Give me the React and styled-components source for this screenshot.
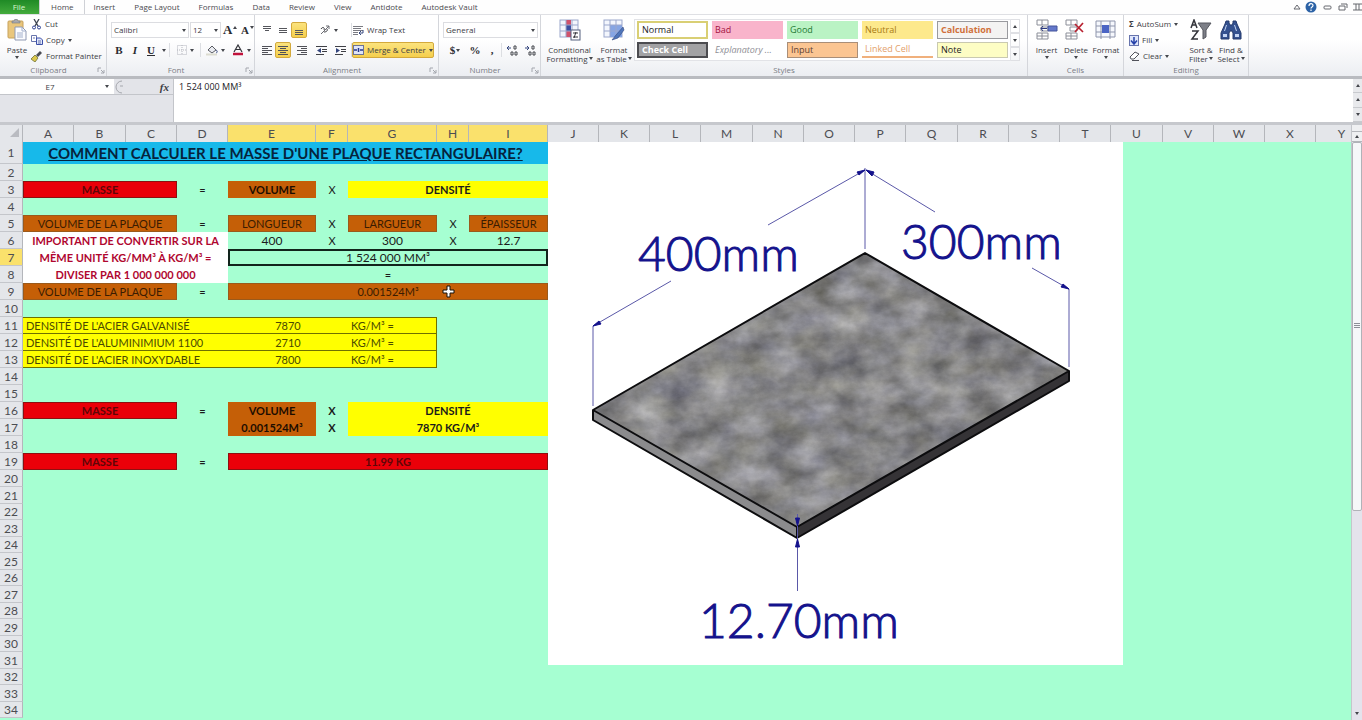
import React, { useState } from "react";
import styled, { createGlobalStyle, css } from "styled-components";

const GlobalStyle = createGlobalStyle`
  * {
    box-sizing: border-box;
  }

  body {
    margin: 0;
    background: #a6ffd2;
  }

  button, input, select, textarea {
    font: inherit;
    color: inherit;
    margin: 0;
    padding: 0;
    border: 0;
    background: none;
    outline: none;
  }
`;

const Window = styled.div`
  display: flex;
  flex-direction: column;
  height: 100vh;
  overflow: hidden;
  font-family: "Open Sans", "Noto Sans", sans-serif;
  font-size: 8px;
  line-height: 10px;
  color: #3c3c44;
`;

/* tabs */

const TabBar = styled.nav`
  display: flex;
  height: 14px;
  flex: none;
  background: #fefefe;
`;

const Tab = styled.button`
  padding: 0 10px 0 9px;
  height: 14px;
  line-height: 12px;
  white-space: nowrap;
  color: #4a4a50;

  ${({ $file }) =>
    $file &&
    css`
      width: 39px;
      color: #d9f5cf;
      background: linear-gradient(#1f8a26, #43ab3c);
    `}

  ${({ $active }) =>
    $active &&
    css`
      padding-left: 11px;
      border-left: 1px solid #cfd1d6;
      border-right: 1px solid #cfd1d6;
    `}
`;

const WindowButtons = styled.div`
  display: flex;
  align-items: center;
  gap: 4px;
  margin-left: auto;
`;

const PlainButton = styled.button`
  display: flex;
  align-items: center;
  justify-content: center;
`;

/* ribbon */

const Ribbon = styled.div`
  display: flex;
  flex: none;
  height: 65px;
  border-top: 1px solid #dfe0e4;
  border-bottom: 3px solid #b9bbc0;
  background: linear-gradient(#ffffff 40%, #eceef2);
`;

const Group = styled.section`
  display: flex;
  flex-direction: column;
  flex: none;
  width: ${({ $width }) => $width}px;
  border-right: 1px solid #d4d6db;
`;

const GroupBody = styled.div`
  display: flex;
  height: 49px;
  padding: 1px 2px 0 4px;
`;

const GroupLabel = styled.div`
  display: flex;
  height: 12px;
  align-items: center;
  justify-content: center;
  color: #7b7d84;

  span {
    flex: 1;
    text-align: center;
  }
`;

const Stack = styled.div`
  display: flex;
  flex-direction: column;
  flex: 1;
  padding-top: ${({ $tight }) => ($tight ? 0 : 6)}px;
  gap: ${({ $tight }) => ($tight ? 0 : 4)}px;
`;

const Line = styled.div`
  display: flex;
  align-items: center;
  height: 16px;
  gap: ${({ $gap }) => $gap || 0}px;
`;

const Tool = styled.button`
  display: flex;
  align-items: center;
  justify-content: center;
  flex: none;
  gap: 3px;
  height: 16px;
  min-width: ${({ $width }) => $width || 16}px;
  white-space: nowrap;
  border: 1px solid transparent;

  ${({ $on }) =>
    $on &&
    css`
      border-color: #d3a93c;
      border-radius: 2px;
      background: linear-gradient(#fbe37e, #f5cf4d);
    `}
`;

const BigTool = styled.button`
  display: flex;
  flex-direction: column;
  align-items: center;
  flex: none;
  width: ${({ $width }) => $width}px;
  padding-top: 3px;
  line-height: 9px;
  white-space: nowrap;

  > svg:first-child {
    margin-bottom: 4px;
  }

  > svg:last-child {
    margin-top: 2px;
  }
`;

const Select = styled.select`
  appearance: none;
  width: ${({ $width }) => $width}px;
  height: 16px;
  padding-left: 2px;
  border: 1px solid #dcdde1;
  background: #ffffff;
`;

const SelectWrap = styled.label`
  position: relative;
  display: flex;
  align-items: center;

  svg {
    position: absolute;
    right: 3px;
  }
`;

const Rule = styled.span`
  width: 1px;
  height: 14px;
  background: #dcdee2;
`;

const Gallery = styled.div`
  display: grid;
  grid-template-columns: repeat(5, 71px);
  grid-template-rows: 18px 16px;
  gap: 3px 4px;
  padding: 1px 2px 0 2px;
  height: 42px;
  margin-top: 3px;
  border: 1px solid #e2e3e7;
  background: #ffffff;
`;

const Style = styled.button`
  padding-left: 3px;
  text-align: left;
  font-size: 9px;
  white-space: nowrap;
  color: ${({ $color }) => $color};
  background: ${({ $fill }) => $fill};
  border: ${({ $border }) => $border || "0"};
  border-bottom: ${({ $under, $border }) => $under || $border || "0"};
  font-weight: ${({ $bold }) => ($bold ? 700 : 400)};
  font-style: ${({ $italic }) => ($italic ? "italic" : "normal")};
`;

const GalleryArrows = styled.div`
  display: flex;
  flex-direction: column;
  width: 9px;
  height: 42px;
  margin-top: 3px;

  button {
    flex: 1;
    border: 1px solid #dfe0e4;
    border-left: 0;
  }
`;

/* formula bar */

const FormulaBar = styled.div`
  display: flex;
  flex: none;
  height: 43px;
  background: #e3e4e9;
`;

const NameArea = styled.div`
  display: flex;
  align-items: center;
  width: 173px;
  height: 16px;
  border-bottom: 1px solid #c3c5ca;
`;

const NameBox = styled.input`
  width: 100px;
  height: 15px;
  text-align: center;
  background: #ffffff;
`;

const NameArrow = styled(PlainButton)`
  width: 14px;
  height: 15px;
  background: #ffffff;
`;

const FxButton = styled.button`
  margin-left: auto;
  margin-right: 4px;
  font-family: "Liberation Serif", serif;
  font-size: 11px;
  font-style: italic;
  font-weight: 700;
`;

const Formula = styled.textarea`
  flex: 1;
  padding: 2px 5px;
  resize: none;
  font-size: 9px;
  line-height: 12px;
  border-left: 1px solid #c3c5ca;
  background: #ffffff;
  color: #222226;
`;

const SideArrows = styled.div`
  display: flex;
  flex-direction: column;
  width: 9px;
  background: #e8e9ec;

  button {
    flex: 1;
    border-bottom: 1px solid #c8cace;
  }
`;

/* sheet */

const SheetArea = styled.div`
  display: flex;
  flex: 1;
  min-height: 0;
  border-top: 3px solid #c6c8cd;
  background: #a6ffd2;
`;

const Sheet = styled.div`
  position: relative;
  flex: 1;
  min-width: 0;
  overflow: hidden;
`;

const Grid = styled.table`
  width: 1368px;
  table-layout: fixed;
  border-collapse: separate;
  border-spacing: 0;
  font-family: Lato, "Open Sans", sans-serif;
  font-size: 12px;
  line-height: 15px;
  color: #1b1b1b;

  th, td {
    padding: 0;
    overflow: hidden;
    white-space: nowrap;
  }
`;

const ColumnHead = styled.th`
  height: 17px;
  font-weight: 400;
  color: #4c4d52;
  border-right: 1px solid #b4b6bb;
  background: ${({ $on }) => ($on ? "#fae16c" : "#e4e6ea")};
`;

const RowHead = styled.th`
  height: ${({ $height }) => $height}px;
  font-weight: 400;
  color: #4c4d52;
  border-right: 1px solid #b4b6bb;
  border-bottom: 1px solid #c4c6cb;
  background: ${({ $on }) => ($on ? "#fae16c" : "#e4e6ea")};
`;

const kinds = {
  plain: css``,
  number: css`
    font-size: 12px;
  `,
  bold: css`
    font-weight: 700;
  `,
  title: css`
    font-size: 15px;
    line-height: 22px;
    font-weight: 700;
    text-decoration: underline;
    color: #06233c;
    background: #17b9ea;
  `,
  red: css`
    font-weight: 700;
    color: #5e0608;
    background: #ea0009;
    box-shadow: inset 0 0 0 1px #8e1010;
  `,
  brown: css`
    color: #3a1c02;
    background: #c55f07;
    box-shadow: inset 0 0 0 1px #9a5a1c;
  `,
  brownBold: css`
    font-weight: 700;
    color: #1d0d00;
    background: #c55f07;
  `,
  yellow: css`
    font-weight: 700;
    background: #ffff00;
  `,
  note: css`
    font-weight: 700;
    line-height: 17px;
    color: #b0062f;
    background: #ffffff;
  `,
  density: css`
    color: #4a4a00;
    background: #ffff00;
    border-bottom: 1px solid #6f7000;
  `,
  selected: css`
    font-size: 12px;
    line-height: 13px;
    border: 2px solid #12241c;
  `,
};

const Cell = styled.td`
  font-size: 11px;
  text-align: ${({ $left }) => ($left ? "left" : "center")};
  ${({ $kind }) => kinds[$kind]}
  && {
    padding-left: ${({ $left }) => ($left ? 3 : 0)}px;
    white-space: ${({ $kind }) => ($kind === "note" ? "pre-line" : "nowrap")};
  }
  ${({ $top }) => $top && "border-top: 1px solid #6f7000;"}
  ${({ $end }) => $end && "border-right: 1px solid #6f7000;"}
`;

const Picture = styled.figure`
  position: absolute;
  left: 548px;
  top: 17px;
  margin: 0;
  background: #ffffff;

  svg {
    display: block;
  }

  text {
    font-family: Lato, sans-serif;
    font-size: 48px;
    font-weight: 300;
    fill: #14128c;
    stroke: #14128c;
    stroke-width: 1px;
  }
`;

const Pointer = styled.svg`
  position: absolute;
  left: 442px;
  top: 160px;
`;

const ScrollBar = styled.div`
  display: flex;
  flex-direction: column;
  flex: none;
  width: 11px;
  background: #e4e3ec;
  border-left: 1px solid #c4c6cb;

  button {
    height: 10px;
    flex: none;
    background: #eff0f2;
    border-bottom: 1px solid #b4b6bb;
  }

  button:first-child {
    height: 7px;
  }

  button:last-child {
    height: 14px;
    margin-top: auto;
    border-bottom: 0;
    background: none;
  }
`;

const ScrollThumb = styled.div`
  display: flex;
  align-items: center;
  justify-content: center;
  height: 62%;
  border: 1px solid #b0b2b8;
  border-radius: 2px;
  background: #f6f7f9;
`;

const columns = [
  ["A", 51], ["B", 52], ["C", 51], ["D", 51], ["E", 88], ["F", 32],
  ["G", 89], ["H", 32], ["I", 79], ["J", 51], ["K", 51], ["L", 51],
  ["M", 52], ["N", 51], ["O", 51], ["P", 51], ["Q", 52], ["R", 51],
  ["S", 51], ["T", 51], ["U", 52], ["V", 51], ["W", 51], ["X", 51],
  ["Y", 52],
];

const density = (name, value, top) => [
  { span: 4, kind: "density", left: true, top, text: name },
  { span: 2, kind: "density", top, text: value },
  { kind: "density", left: true, top, end: true, text: "KG/M³ =" },
];

const rows = {
  1: [{ span: 9, kind: "title", text: "COMMENT CALCULER LE MASSE D'UNE PLAQUE RECTANGULAIRE?" }],
  3: [
    { span: 3, kind: "red", text: "MASSE" },
    { text: "=" },
    { kind: "brownBold", text: "VOLUME" },
    { text: "X" },
    { span: 3, kind: "yellow", text: "DENSITÉ" },
  ],
  5: [
    { span: 3, kind: "brown", text: "VOLUME DE LA PLAQUE" },
    { text: "=" },
    { kind: "brown", text: "LONGUEUR" },
    { text: "X" },
    { kind: "brown", text: "LARGUEUR" },
    { text: "X" },
    { kind: "brown", text: "ÉPAISSEUR" },
  ],
  6: [
    {
      span: 4,
      rows: 3,
      kind: "note",
      text: "IMPORTANT DE CONVERTIR SUR LA\nMÊME UNITÉ KG/MM³ À KG/M³ =\nDIVISER PAR 1 000 000 000",
    },
    { kind: "number", text: "400" },
    { text: "X" },
    { kind: "number", text: "300" },
    { text: "X" },
    { kind: "number", text: "12.7" },
  ],
  7: [{ span: 5, kind: "selected", text: "1 524 000 MM³" }],
  8: [{ span: 5, text: "=" }],
  9: [
    { span: 3, kind: "brown", text: "VOLUME DE LA PLAQUE" },
    { text: "=" },
    { span: 5, kind: "brown", text: "0.001524M³" },
  ],
  11: density("DENSITÉ DE L'ACIER GALVANISÉ", "7870", true),
  12: density("DENSITÉ DE L'ALUMINIMIUM 1100", "2710"),
  13: density("DENSITÉ DE L'ACIER INOXYDABLE", "7800"),
  16: [
    { span: 3, kind: "red", text: "MASSE" },
    { kind: "bold", text: "=" },
    { kind: "brownBold", text: "VOLUME" },
    { kind: "bold", text: "X" },
    { span: 3, kind: "yellow", text: "DENSITÉ" },
  ],
  17: [
    { span: 4 },
    { kind: "brownBold", text: "0.001524M³" },
    { kind: "bold", text: "X" },
    { span: 3, kind: "yellow", text: "7870 KG/M³" },
  ],
  19: [
    { span: 3, kind: "red", text: "MASSE" },
    { kind: "bold", text: "=" },
    { span: 5, kind: "red", text: "11.99 KG" },
  ],
};

const rowHeight = (n) => {
  if (n === 1) return 22;
  if (n < 22) return 17;
  return n % 2 ? 17 : 16;
};

const styleCells = [
  { text: "Normal", color: "#222", fill: "#fff", border: "2px solid #d9cf74" },
  { text: "Bad", color: "#a3123f", fill: "#f9b4cb" },
  { text: "Good", color: "#1f7a34", fill: "#baf3c4" },
  { text: "Neutral", color: "#a87a12", fill: "#fde98c" },
  { text: "Calculation", color: "#d0703a", fill: "#f4f3f2", border: "1px solid #9a9a9e", bold: true },
  { text: "Check Cell", color: "#fff", fill: "#a2a2a4", border: "2px solid #4c4c50", bold: true },
  { text: "Explanatory ...", color: "#8e8e94", fill: "#fff", italic: true },
  { text: "Input", color: "#5c4034", fill: "#fbc592", border: "1px solid #a98e78" },
  { text: "Linked Cell", color: "#e3a26c", fill: "#fff", under: "2px solid #f0b07c" },
  { text: "Note", color: "#222", fill: "#fdfdc4", border: "1px solid #c9c9b0" },
];

const Down = ({ up }) => (
  <svg width="4" height="3" viewBox="0 0 4 3" aria-hidden="true">
    <path d={up ? "M0 3h4L2 0z" : "M0 0h4L2 3z"} fill="#44464c" />
  </svg>
);

const Launcher = () => (
  <svg width="9" height="7" viewBox="0 0 9 7" aria-hidden="true">
    <path d="M1 5V1h3M4 3l3 3M7 3v3H4" fill="none" stroke="#a3a6ad" />
  </svg>
);

const PasteIcon = () => (
  <svg width="20" height="22" viewBox="0 0 20 22">
    <rect x="1" y="2" width="15" height="17" rx="1" fill="#e9c67c" stroke="#c7a15a" />
    <path d="M5 4V2h2l1-2h2l1 2h2v2z" fill="#a8a9ae" stroke="#77787c" strokeWidth=".6" />
    <path d="M8 8h7l4 4v9H8z" fill="#fbfcff" stroke="#8f99b2" />
    <path d="M15 8v4h4M10 14h6M10 16h6M10 18h6" fill="none" stroke="#a3b0cc" />
  </svg>
);

const CutIcon = () => (
  <svg width="11" height="11" viewBox="-1 0 11 11">
    <path d="M2 0l4 7M7 0L3 7" stroke="#3d4350" strokeWidth="1.300" />
    <circle cx="2" cy="8.500" r="1.500" fill="none" stroke="#2c3f92" />
    <circle cx="7" cy="8.500" r="1.500" fill="none" stroke="#2c3f92" />
  </svg>
);

const CopyIcon = () => (
  <svg width="12" height="10" viewBox="0 0 12 10">
    <path d="M.5.5h5v6h-5z" fill="#fff" stroke="#6875ad" />
    <path d="M5.500 3h4l2 2v4.500h-6z" fill="#dfe6fa" stroke="#3c4fa8" />
    <path d="M2 3h2M7 6h3M7 8h3" stroke="#6875ad" />
  </svg>
);

const BrushIcon = () => (
  <svg width="12" height="11" viewBox="0 0 12 11">
    <path d="M5 4l4-4 2 2-4 4z" fill="#4a4c54" />
    <path d="M0 8l4-4 3 3-3 4z" fill="#dcc84e" stroke="#6f7136" strokeWidth=".8" />
  </svg>
);

const rulesFor = {
  top: [[1, 8], [3, 8], [5, 4]],
  middle: [[3, 8], [5, 8], [7, 8]],
  bottom: [[5, 8], [7, 8], [9, 8]],
};

const VAlign = ({ at }) => (
  <svg width="10" height="11" viewBox="0 0 10 11">
    {rulesFor[at].map(([y, w]) => (
      <path key={y} d={`M${5 - w / 2} ${y}.5h${w}`} stroke="#55565c" />
    ))}
  </svg>
);

const HAlign = ({ at }) => (
  <svg width="10" height="11" viewBox="0 0 10 11">
    {[10, 6, 10, 6, 10].map((w, i) => {
      const x = at === "left" ? 0 : at === "right" ? 10 - w : (10 - w) / 2;
      return <path key={i} d={`M${x} ${i * 2 + 1}.5h${w}`} stroke="#505158" />;
    })}
  </svg>
);

const Indent = ({ back }) => (
  <svg width="11" height="11" viewBox="0 0 11 11">
    <path d="M0 1.500h11M6 4.500h5M6 6.500h5M0 9.500h8" stroke="#3f4046" />
    <path d={back ? "M5 3L1 5.500 5 8z" : "M1 3l4 2.500L1 8z"} fill="#34467e" />
  </svg>
);

const OrientationIcon = () => (
  <svg width="11" height="10" viewBox="0 0 11 10">
    <path d="M1 9L9 1M9 1H6M9 1v3" fill="none" stroke="#6b6c73" />
    <path d="M1 4c2-3 4-1 3 1M4 7c2 0 4-1 3-3" fill="none" stroke="#33343a" />
  </svg>
);

const WrapIcon = () => (
  <svg width="11" height="11" viewBox="0 0 11 11">
    <path d="M0 1.500h10M0 3.500h8M0 5.500h10M0 7.500h5M0 9.500h5" stroke="#7a7b82" />
    <path d="M10 5v3H6l2-2M6 8l2 2" fill="none" stroke="#34467e" />
  </svg>
);

const MergeIcon = () => (
  <svg width="11" height="10" viewBox="0 0 11 10">
    <rect x=".5" y=".5" width="10" height="9" fill="#dfe5f8" stroke="#6c7398" />
    <path d="M1 5h3M10 5H7M5.500 3v4" stroke="#24368c" strokeWidth="1.500" />
  </svg>
);

const BordersIcon = () => (
  <svg width="10" height="10" viewBox="0 0 10 10">
    <path d="M.5.5h9v9h-9zM5 0v10M0 5h10" fill="none" stroke="#b5b7be" strokeDasharray="1 1" />
  </svg>
);

const BucketIcon = () => (
  <svg width="12" height="11" viewBox="0 0 12 11">
    <path d="M2 5l4-4 4 4-4 3z" fill="#e9ebf0" stroke="#595b62" />
    <path d="M10 5c2 1 1 3 0 3" stroke="#34467e" fill="none" />
    <path d="M0 9.500h11" stroke="#dcdcd0" strokeWidth="2" />
  </svg>
);

const FontColorIcon = () => (
  <svg width="12" height="12" viewBox="0 0 12 12">
    <path d="M2 8l4-7 4 7M4 5.500h4" fill="none" stroke="#33343a" strokeWidth="1.200" />
    <path d="M1 10h10" stroke="#c1133c" strokeWidth="2.500" />
  </svg>
);

const DecimalIcon = ({ less }) => (
  <svg width="12" height="11" viewBox="0 0 12 11">
    <path d={less ? "M1 3h4M1 3l2-2M1 3l2 2" : "M5 3H1M5 3L3 1M5 3L3 5"} fill="none" stroke="#34467e" />
    <path d="M8 1h2v3H8zM5 7h2v3H5zM9 7h2v3H9z" fill="none" stroke="#44464c" />
  </svg>
);

const TableIcon = ({ formatting }) => (
  <svg width="22" height="22" viewBox="0 0 22 22">
    <rect x="1" y="1" width="18" height="17" fill="#f3f6fd" stroke="#9ba7cc" />
    {formatting ? (
      <>
        <path d="M7 1h5v5H7zM7 12h5v6H7z" fill="#d0526c" />
        <path d="M7 6h5v6H7z" fill="#3b4ea0" />
      </>
    ) : (
      <path d="M7 6h12v12H7z" fill="#86a5e4" />
    )}
    <path d="M1 6h18M1 12h18M7 1v17M13 1v17" stroke="#9ba7cc" />
    {formatting ? (
      <>
        <rect x="12" y="11" width="9" height="10" fill="#fff" stroke="#55607f" />
        <path d="M14 14h5M14 18h5M17 13l-2 6" stroke="#33343a" />
      </>
    ) : (
      <path d="M20 8l-7 8-4 5 6-2 6-8z" fill="#4f76ba" stroke="#34467e" strokeWidth=".6" />
    )}
  </svg>
);

const CellsIcon = ({ mode }) => (
  <svg width="22" height="22" viewBox="0 0 22 22">
    {mode === "format" ? (
      <>
        <path d="M1 2h19v16H1zM1 7h19M1 13h19M6 2v18M15 2v18" fill="#f6f8fd" stroke="#8e95ac" />
        <rect x="7" y="6" width="7" height="8" fill="#4b64c4" />
      </>
    ) : (
      <>
        <path d="M1 1h11v5H1zM6 1v5M1 14h11v6H1zM6 14v6M1 17h11" fill="#fff" stroke="#8b8e98" />
        <path d="M5 8h7v4H5z" fill="#fff" stroke="#8b8e98" />
        {mode === "insert" ? (
          <>
            <path d="M12 7h9v5h-9z" fill="#6478cb" stroke="#45549a" />
            <path d="M11 9.500H5M7 7L5 9.500 7 12" stroke="#2b3a80" fill="none" />
          </>
        ) : (
          <path d="M10 5l8 8M18 4l-8 9" stroke="#b8202f" strokeWidth="1.700" />
        )}
      </>
    )}
  </svg>
);

const FillIcon = () => (
  <svg width="10" height="11" viewBox="0 0 10 11">
    <rect x=".5" y=".5" width="9" height="10" fill="#dfe6fb" stroke="#6875ad" />
    <path d="M5 2v6M2 5.500L5 9l3-3.500" fill="none" stroke="#2641a8" strokeWidth="1.500" />
  </svg>
);

const EraserIcon = () => (
  <svg width="11" height="10" viewBox="0 0 11 10">
    <path d="M1 6l5-5 4 2-5 5H2z" fill="#fff" stroke="#50525a" />
    <path d="M3 9.500h7" stroke="#50525a" />
  </svg>
);

const SortIcon = () => (
  <svg width="22" height="22" viewBox="0 0 22 22">
    <path d="M1 9l3-8 3 8M2 6h4M2 12h6l-6 8h6" fill="none" stroke="#33343a" strokeWidth="1.500" />
    <path d="M8 4h13l-5 7v7l-3 2v-9z" fill="#7d7f87" stroke="#55575e" />
  </svg>
);

const FindIcon = () => (
  <svg width="22" height="22" viewBox="0 0 22 22">
    <path
      d="M6 2h3v2l1 2h2l1-2V2h3l1 3 4 9v6h-8v-6l-1-2h-2l-1 2v6H1v-6l4-9z"
      fill="#34518f"
      stroke="#253a6c"
      strokeLinejoin="round"
    />
    <path d="M3 15h4v3H3zM15 15h4v3h-4zM6 6h1l-2 6H4zM14 6h1l2 6h-1z" fill="#c4d5f3" />
  </svg>
);

const PlateDrawing = () => (
  <svg width="575" height="523" viewBox="548 142 575 523" role="img" aria-label="Plaque 400mm x 300mm x 12.70mm">
    <defs>
      <filter id="steel" x="0" y="0" width="1" height="1" colorInterpolationFilters="sRGB">
        <feTurbulence type="fractalNoise" baseFrequency="0.03 0.045" numOctaves="7" seed="4" />
        <feColorMatrix
          values="0.42 0.06 0 0 0.290
                  0.42 0.05 0 0 0.293
                  0.42 0 0.07 0 0.290
                  0 0 0 0 1"
        />
        <feComposite in2="SourceGraphic" operator="in" />
      </filter>
    </defs>
    <path d="M865 253L1069 371 797 527 593 410z" fill="#858587" filter="url(#steel)" />
    <path d="M593 410L797 527V538L593 420z" fill="#8b8b8d" />
    <path d="M797 527L1069 371V381L797 538z" fill="#353336" />
    <path
      d="M865 253L1069 371 797 527 593 410zM593 410V420L797 538 1069 381V371M797 527V538"
      fill="none"
      stroke="#0c0c0e"
      strokeWidth="2"
      strokeLinejoin="round"
    />
    <path
      d="M865 168V249M865 170L768 225M866 170L935 212M593 406V326L671 281M1069 367V289L1032 268M797.500 514V591"
      fill="none"
      stroke="#5a58a8"
    />
    <path
      d="M865 170l-8 2 2 3zM866 170l6 6 2-4zM593 326l6-5 2 3zM1069 289l-6-5-2 3zM797.500 526l-2-8h4zM797.500 539l-2 8h4z"
      fill="#14128c"
      stroke="#14128c"
    />
    <text x="638" y="271">400mm</text>
    <text x="901" y="259">300mm</text>
    <text x="699" y="638">12.70mm</text>
  </svg>
);

const Clipboard = () => (
  <Group $width={107}>
    <GroupBody>
      <BigTool $width={26}>
        <PasteIcon />
        Paste
        <Down />
      </BigTool>
      <Stack $tight>
        <Line><Tool><CutIcon /> Cut</Tool></Line>
        <Line><Tool><CopyIcon /> Copy <Down /></Tool></Line>
        <Line><Tool><BrushIcon /> Format Painter</Tool></Line>
      </Stack>
    </GroupBody>
    <GroupLabel><span>Clipboard</span><Launcher /></GroupLabel>
  </Group>
);

const LetterTool = styled(Tool)`
  gap: 1px;
  font-family: "Liberation Serif", serif;
  font-size: ${({ $size }) => $size || 11}px;
  font-weight: 700;
  font-style: ${({ $italic }) => ($italic ? "italic" : "normal")};
  text-decoration: ${({ $underline }) => ($underline ? "underline" : "none")};
  color: #2a2b30;

  svg {
    margin-bottom: ${({ $raised }) => ($raised ? 6 : 0)}px;
  }
`;

const Font = () => (
  <Group $width={148}>
    <GroupBody>
      <Stack>
        <Line $gap={1}>
          <SelectWrap>
            <Select $width={78} aria-label="Font"><option>Calibri</option></Select>
            <Down />
          </SelectWrap>
          <SelectWrap>
            <Select $width={31} aria-label="Font size"><option>12</option></Select>
            <Down />
          </SelectWrap>
          <LetterTool $size={13} $raised>A<Down up /></LetterTool>
          <LetterTool $raised>A<Down /></LetterTool>
        </Line>
        <Line>
          <LetterTool>B</LetterTool>
          <LetterTool $italic>I</LetterTool>
          <LetterTool $underline>U</LetterTool>
          <Tool $width={10} aria-label="Underline options"><Down /></Tool>
          <Rule />
          <Tool $width={30} aria-label="Borders"><BordersIcon /> <Down /></Tool>
          <Rule />
          <Tool $width={28} aria-label="Fill color"><BucketIcon /> <Down /></Tool>
          <Tool $width={24} aria-label="Font color"><FontColorIcon /> <Down /></Tool>
        </Line>
      </Stack>
    </GroupBody>
    <GroupLabel><span>Font</span><Launcher /></GroupLabel>
  </Group>
);

const Alignment = () => (
  <Group $width={184}>
    <GroupBody>
      <Stack>
        <Line>
          <Tool aria-label="Top align"><VAlign at="top" /></Tool>
          <Tool aria-label="Middle align"><VAlign at="middle" /></Tool>
          <Tool $on aria-label="Bottom align"><VAlign at="bottom" /></Tool>
          <Tool $width={44} aria-label="Orientation"><OrientationIcon /> <Down /></Tool>
          <Rule />
          <Tool><WrapIcon /> Wrap Text</Tool>
        </Line>
        <Line>
          <Tool aria-label="Align left"><HAlign at="left" /></Tool>
          <Tool $on aria-label="Center"><HAlign at="center" /></Tool>
          <Tool $width={22} aria-label="Align right"><HAlign at="right" /></Tool>
          <Tool aria-label="Decrease indent"><Indent back /></Tool>
          <Tool $width={22} aria-label="Increase indent"><Indent /></Tool>
          <Rule />
          <Tool $on><MergeIcon /> Merge & Center <Down /></Tool>
        </Line>
      </Stack>
    </GroupBody>
    <GroupLabel><span>Alignment</span><Launcher /></GroupLabel>
  </Group>
);

const NumberGroup = () => (
  <Group $width={102}>
    <GroupBody>
      <Stack>
        <Line>
          <SelectWrap>
            <Select $width={95} aria-label="Number format"><option>General</option></Select>
            <Down />
          </SelectWrap>
        </Line>
        <Line>
          <LetterTool $width={24}>$ <Down /></LetterTool>
          <LetterTool>%</LetterTool>
          <LetterTool $width={18}>,</LetterTool>
          <Rule />
          <Tool $width={20} aria-label="Increase decimal"><DecimalIcon less /></Tool>
          <Tool aria-label="Decrease decimal"><DecimalIcon /></Tool>
        </Line>
      </Stack>
    </GroupBody>
    <GroupLabel><span>Number</span><Launcher /></GroupLabel>
  </Group>
);

const ArrowText = styled.span`
  display: flex;
  align-items: center;
  gap: 1px;
`;

const Styles = () => (
  <Group $width={487}>
    <GroupBody>
      <BigTool $width={49}>
        <TableIcon formatting />
        Conditional
        <ArrowText>Formatting <Down /></ArrowText>
      </BigTool>
      <BigTool $width={40}>
        <TableIcon />
        Format
        <ArrowText>as Table <Down /></ArrowText>
      </BigTool>
      <Gallery>
        {styleCells.map((s) => (
          <Style
            key={s.text}
            $color={s.color}
            $fill={s.fill}
            $border={s.border}
            $under={s.under}
            $bold={s.bold}
            $italic={s.italic}
          >
            {s.text}
          </Style>
        ))}
      </Gallery>
      <GalleryArrows>
        <PlainButton aria-label="Previous styles"><Down up /></PlainButton>
        <PlainButton aria-label="Next styles"><Down /></PlainButton>
        <PlainButton aria-label="More styles"><Down /></PlainButton>
      </GalleryArrows>
    </GroupBody>
    <GroupLabel>Styles</GroupLabel>
  </Group>
);

const Cells = () => (
  <Group $width={96}>
    <GroupBody>
      <BigTool $width={29}><CellsIcon mode="insert" />Insert<Down /></BigTool>
      <BigTool $width={30}><CellsIcon mode="delete" />Delete<Down /></BigTool>
      <BigTool $width={30}><CellsIcon mode="format" />Format<Down /></BigTool>
    </GroupBody>
    <GroupLabel>Cells</GroupLabel>
  </Group>
);

const Editing = () => (
  <Group $width={125}>
    <GroupBody>
      <Stack $tight>
        <Line><Tool><b>Σ</b> AutoSum <Down /></Tool></Line>
        <Line><Tool><FillIcon /> Fill <Down /></Tool></Line>
        <Line><Tool><EraserIcon /> Clear <Down /></Tool></Line>
      </Stack>
      <BigTool $width={30}>
        <SortIcon />
        Sort &
        <ArrowText>Filter <Down /></ArrowText>
      </BigTool>
      <BigTool $width={30}>
        <FindIcon />
        Find &
        <ArrowText>Select <Down /></ArrowText>
      </BigTool>
    </GroupBody>
    <GroupLabel>Editing</GroupLabel>
  </Group>
);

const tabs = [
  "Home", "Insert", "Page Layout", "Formulas", "Data", "Review", "View",
  "Antidote", "Autodesk Vault",
];

const App = () => {
  const [tab, setTab] = useState("Home");
  const [formula, setFormula] = useState("1 524 000 MM³");

  return (
    <Window>
      <GlobalStyle />
      <TabBar>
        <Tab $file>File</Tab>
        {tabs.map((name) => (
          <Tab key={name} $active={name === tab} onClick={() => setTab(name)}>
            {name}
          </Tab>
        ))}
        <WindowButtons>
          <PlainButton aria-label="Minimize ribbon">
            <svg width="8" height="8" viewBox="0 0 8 8">
              <path d="M1 6h6L4 2z" fill="none" stroke="#66686f" />
            </svg>
          </PlainButton>
          <PlainButton aria-label="Help">
            <svg width="12" height="12" viewBox="0 0 12 12">
              <circle cx="6" cy="6" r="5.500" fill="#2c62a6" />
              <path d="M4 5c0-3 4-3 4-.5C8 6 6 6 6 7.500M6 8.500v1.500" stroke="#fff" fill="none" strokeWidth="1.200" />
            </svg>
          </PlainButton>
          <PlainButton aria-label="Minimize">
            <svg width="12" height="8" viewBox="0 0 12 8">
              <rect x="3" y="3" width="7" height="3" rx="1" fill="none" stroke="#66686f" />
            </svg>
          </PlainButton>
          <PlainButton aria-label="Restore">
            <svg width="12" height="8" viewBox="0 0 12 8">
              <path d="M4 1h6v4M2 3h6v4H2z" fill="none" stroke="#66686f" />
            </svg>
          </PlainButton>
          <PlainButton aria-label="Close">
            <svg width="9" height="8" viewBox="0 0 9 8">
              <path d="M0 1h9M0 7h9M3 1v6M6 1v6" fill="none" stroke="#66686f" />
            </svg>
          </PlainButton>
        </WindowButtons>
      </TabBar>

      <Ribbon>
        <Clipboard />
        <Font />
        <Alignment />
        <NumberGroup />
        <Styles />
        <Cells />
        <Editing />
      </Ribbon>

      <FormulaBar>
        <NameArea>
          <NameBox aria-label="Name box" defaultValue="E7" />
          <NameArrow aria-label="Names"><Down /></NameArrow>
          <svg width="10" height="14" viewBox="0 0 10 14">
            <path d="M8 1a6 6 0 0 0 0 12M6 6h3" fill="none" stroke="#a5a7ad" />
          </svg>
          <FxButton>fx</FxButton>
        </NameArea>
        <Formula
          aria-label="Formula"
          value={formula}
          onChange={(e) => setFormula(e.target.value)}
        />
        <SideArrows>
          <PlainButton aria-label="Collapse"><Down up /></PlainButton>
          <PlainButton aria-label="Scroll up"><Down up /></PlainButton>
          <PlainButton aria-label="Scroll down"><Down /></PlainButton>
        </SideArrows>
      </FormulaBar>

      <SheetArea>
        <Sheet>
          <Grid>
            <colgroup>
              <col width="23" />
              {columns.map(([name, width]) => (
                <col key={name} width={width} />
              ))}
            </colgroup>
            <thead>
              <tr>
                <ColumnHead aria-label="Select all">
                  <svg width="20" height="12" viewBox="0 0 20 12">
                    <path d="M18 2v9H9z" fill="#b9bbc1" />
                  </svg>
                </ColumnHead>
                {columns.map(([name]) => (
                  <ColumnHead key={name} scope="col" $on={"EFGHI".includes(name)}>
                    {name}
                  </ColumnHead>
                ))}
              </tr>
            </thead>
            <tbody>
              {Array.from({ length: 34 }, (_, i) => i + 1).map((n) => (
                <tr key={n}>
                  <RowHead scope="row" $height={rowHeight(n)} $on={n === 7}>
                    {n}
                  </RowHead>
                  {(rows[n] || []).map((c, i) => (
                    <Cell
                      key={i}
                      colSpan={c.span || 1}
                      rowSpan={c.rows || 1}
                      $kind={c.kind || "plain"}
                      $left={c.left}
                      $top={c.top}
                      $end={c.end}
                    >
                      {c.text}
                    </Cell>
                  ))}
                </tr>
              ))}
            </tbody>
          </Grid>
          <Picture>
            <PlateDrawing />
          </Picture>
          <Pointer width="13" height="13" viewBox="0 0 13 13" aria-hidden="true">
            <path d="M5 1h3v4h4v3H8v4H5V8H1V5h4z" fill="#fff" stroke="#15100a" />
          </Pointer>
        </Sheet>
        <ScrollBar>
          <PlainButton aria-label="Split" />
          <PlainButton aria-label="Scroll sheet up"><Down up /></PlainButton>
          <ScrollThumb>
            <svg width="6" height="6" viewBox="0 0 6 6">
              <path d="M0 .5h6M0 2.500h6M0 4.500h6" stroke="#8d9097" />
            </svg>
          </ScrollThumb>
          <PlainButton aria-label="Scroll sheet down"><Down /></PlainButton>
        </ScrollBar>
      </SheetArea>
    </Window>
  );
};

export default App;
